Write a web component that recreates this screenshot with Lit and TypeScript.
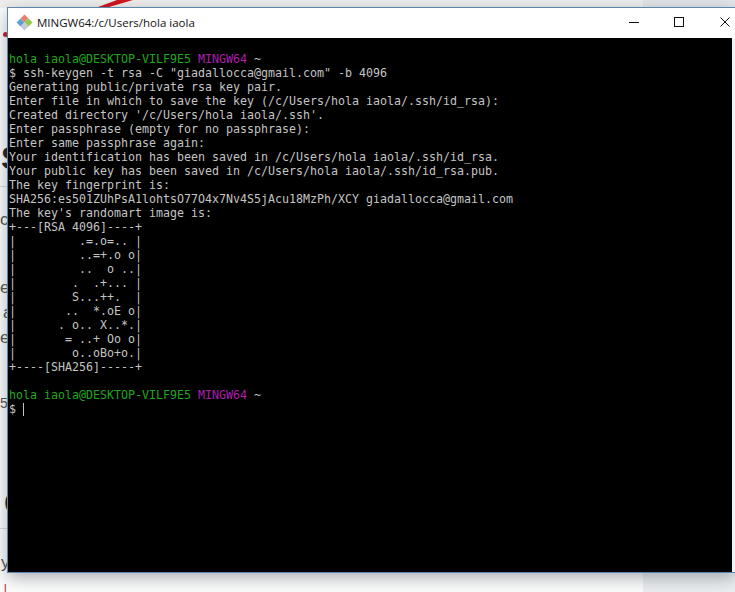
import { LitElement, html, css } from "lit";
import { customElement } from "lit/decorators.js";

const LINES = [
  `$ ssh-keygen -t rsa -C "giadallocca@gmail.com" -b 4096`,
  `Generating public/private rsa key pair.`,
  `Enter file in which to save the key (/c/Users/hola iaola/.ssh/id_rsa):`,
  `Created directory '/c/Users/hola iaola/.ssh'.`,
  `Enter passphrase (empty for no passphrase):`,
  `Enter same passphrase again:`,
  `Your identification has been saved in /c/Users/hola iaola/.ssh/id_rsa.`,
  `Your public key has been saved in /c/Users/hola iaola/.ssh/id_rsa.pub.`,
  `The key fingerprint is:`,
  `SHA256:es501ZUhPsA1lohtsO77O4x7Nv4S5jAcu18MzPh/XCY giadallocca@gmail.com`,
  `The key's randomart image is:`,
  `+---[RSA 4096]----+`,
  `|         .=.o=.. |`,
  `|         ..=+.o o|`,
  `|         ..  o ..|`,
  `|        .  .+... |`,
  `|        S...++.  |`,
  `|       ..  *.oE o|`,
  `|      . o.. X..*.|`,
  `|       = ..+ Oo o|`,
  `|        o..oBo+o.|`,
  `+----[SHA256]-----+`,
];

@customElement("app-root")
export class AppRoot extends LitElement {
  static styles = css`
    :host { display: block; width: 735px; height: 592px; position: relative; overflow: hidden; background: #fdfdfd; font-family: "Liberation Sans", sans-serif; }
    .page { height: 592px; display: grid; grid-template-columns: 643px 1fr; }
    .main { background: linear-gradient(#f0efee 0 8px, #fdfdfd 8px); overflow: hidden; padding-top: 140px; box-sizing: border-box; color: #555; font-size: 17px; }
    .side { background: linear-gradient(#e4e6e9 0 8px, #e9ecef 8px, #eceff1 100%); }
    .frag { margin: 0; line-height: 25px; white-space: nowrap; }
    .big { font-size: 32px; line-height: 36px; color: #222; font-weight: 700; margin: 0; }
    .s { padding-left: 1px; }
    .rule { height: 1px; background: #dcdcdc; }
    .r1 { margin-top: 10px; }
    .c { margin-top: 20px; }
    .para { margin-top: 43px; }
    .shift { padding-left: 3px; }
    .num { margin: 43px 0 0; font-size: 14px; line-height: 20px; }
    .cap { margin-top: 72px; padding-left: 4px; }
    .r2 { margin-top: 7px; }
    .y { margin-top: 21px; padding-left: 1px; }
    .foot { margin: 7px 0 0; padding-left: 4px; font-size: 12px; line-height: 14px; color: #b03030; }
    .window { position: absolute; left: 7px; top: 7px; width: 727px; height: 564px; background: #eef3f7; border: solid #5a87ab; border-width: 1px 0 1px 1px; box-shadow: 0 5px 16px rgba(40,50,60,.38); display: flex; flex-direction: column; }
    .title { height: 30px; box-sizing: border-box; padding-bottom: 2px; flex: none; background: #fff; display: flex; align-items: center; color: #111; font-family: "Open Sans", sans-serif; font-size: 11.5px; }
    .git { margin: 0 4px 0 8px; }
    .label { flex: 1; }
    .ctl { display: flex; align-items: center; gap: 36px; padding-right: 5px; }
    .min { margin-right: -1px; }
    .term { flex: 1; margin: 0 3px 0 0; padding: 14px 0 0 1px; background: #000; font-family: "DejaVu Sans Mono", monospace; font-size: 11.63px; line-height: 14px; color: #c4c4c4; white-space: pre; overflow: hidden; }
    .g { color: #1ea81e; }
    .m { color: #b01cb0; }
    .cursor { display: inline-block; width: 1px; height: 13px; background: #c4c4c4; vertical-align: -3px; }
    .marks { position: absolute; left: 0; top: 0; pointer-events: none; }
  `;

  prompt() {
    return html`<span class="g">hola iaola@DESKTOP-VILF9E5</span> <span class="m">MINGW64</span> ~`;
  }

  render() {
    return html`
      <div class="page">
        <div class="main">
          <p class="big s">S</p>
          <div class="rule r1"></div>
          <p class="frag c">c</p>
          <div class="para">
            <p class="frag">e</p>
            <p class="frag shift">a</p>
            <p class="frag">e</p>
          </div>
          <p class="num">56</p>
          <p class="big cap">C</p>
          <div class="rule r2"></div>
          <p class="frag y">y</p>
          <p class="foot">l</p>
        </div>
        <div class="side"></div>
      </div>
      <svg class="marks" width="735" height="592" viewBox="0 0 735 592">
        <path d="M98 7 L109 7 L133 0 L117 0 Z" fill="#d4141c"/>
        <circle cx="5.500" cy="34.500" r="2.500" fill="#c81e28"/>
      </svg>
      <div class="window">
        <div class="title">
          <svg class="git" width="17" height="17" viewBox="0 0 17 17">
            <path d="M8.500 0.500 L12.500 4.500 L8.500 8.500 L4.500 4.500 Z" fill="#e8806c"/>
            <path d="M4.500 4.500 L8.500 8.500 L4.500 12.500 L0.500 8.500 Z" fill="#5f9fd8"/>
            <path d="M12.500 4.500 L16.500 8.500 L12.500 12.500 L8.500 8.500 Z" fill="#93c94a"/>
            <path d="M8.500 8.500 L12.500 12.500 L8.500 16.500 L4.500 12.500 Z" fill="#c4cbd6"/>
          </svg>
          <span class="label">MINGW64:/c/Users/hola iaola</span>
          <div class="ctl">
            <svg class="min" width="10" height="10" viewBox="0 0 10 10"><path d="M0 5.500H10" stroke="#111" fill="none"/></svg>
            <svg width="10" height="10" viewBox="0 0 10 10"><rect x=".5" y=".5" width="9" height="9" stroke="#111" fill="none"/></svg>
            <svg width="10" height="10" viewBox="0 0 10 10"><path d="M.5 .5L9.500 9.500M9.500 .5L.5 9.500" stroke="#111" fill="none"/></svg>
          </div>
        </div>
        <pre class="term">${this.prompt()}
${LINES.join("\n")}

${this.prompt()}
$ <span class="cursor"></span></pre>
      </div>
    `;
  }
}
